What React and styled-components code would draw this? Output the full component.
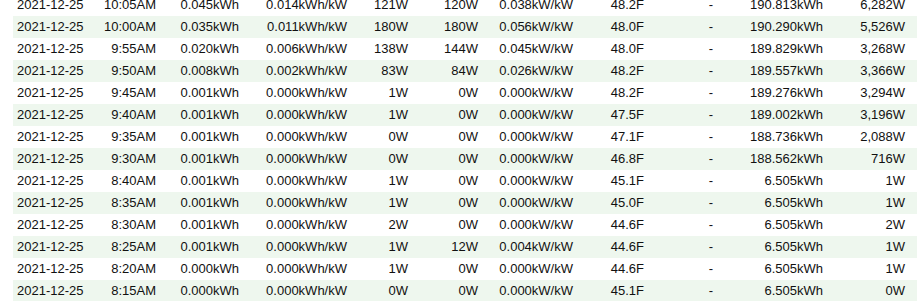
import React from "react";
import styled, { createGlobalStyle } from "styled-components";

const Global = createGlobalStyle`
  html, body { margin: 0; padding: 0; background: #fff; overflow: hidden; }
  body { font-family: "Liberation Sans", Arial, sans-serif; }
`;

const Viewport = styled.div`
  height: 301px;
  overflow: hidden;
  padding-left: 13px;
`;

const Table = styled.div`
  margin-top: -6px;
  display: flex;
  flex-direction: column;
`;

const Row = styled.div`
  display: grid;
  grid-template-columns: 87px 60px 83px 108px 61px 70px 95px 71px 126px 53px 82px 1fr;
  height: 22px;
  line-height: 22px;
  background: ${(p) => (p.$striped ? "#eef7ee" : "#ffffff")};
  font-size: 13px;
  color: #111;
`;

const justify = { left: "flex-start", center: "center", right: "flex-end" };

const Cell = styled.div`
  display: flex;
  padding: 0 4px;
  white-space: nowrap;
  justify-content: ${(p) => justify[p.$align || "right"]};
`;

const rows = [
  ["10:05AM", "0.045kWh", "0.014kWh/kW", "121W", "120W", "0.038kW/kW", "48.2F", "190.813kWh", "6,282W"],
  ["10:00AM", "0.035kWh", "0.011kWh/kW", "180W", "180W", "0.056kW/kW", "48.0F", "190.290kWh", "5,526W"],
  ["9:55AM", "0.020kWh", "0.006kWh/kW", "138W", "144W", "0.045kW/kW", "48.0F", "189.829kWh", "3,268W"],
  ["9:50AM", "0.008kWh", "0.002kWh/kW", "83W", "84W", "0.026kW/kW", "48.2F", "189.557kWh", "3,366W"],
  ["9:45AM", "0.001kWh", "0.000kWh/kW", "1W", "0W", "0.000kW/kW", "48.2F", "189.276kWh", "3,294W"],
  ["9:40AM", "0.001kWh", "0.000kWh/kW", "1W", "0W", "0.000kW/kW", "47.5F", "189.002kWh", "3,196W"],
  ["9:35AM", "0.001kWh", "0.000kWh/kW", "0W", "0W", "0.000kW/kW", "47.1F", "188.736kWh", "2,088W"],
  ["9:30AM", "0.001kWh", "0.000kWh/kW", "0W", "0W", "0.000kW/kW", "46.8F", "188.562kWh", "716W"],
  ["8:40AM", "0.001kWh", "0.000kWh/kW", "1W", "0W", "0.000kW/kW", "45.1F", "6.505kWh", "1W"],
  ["8:35AM", "0.001kWh", "0.000kWh/kW", "1W", "0W", "0.000kW/kW", "45.0F", "6.505kWh", "1W"],
  ["8:30AM", "0.001kWh", "0.000kWh/kW", "2W", "0W", "0.000kW/kW", "44.6F", "6.505kWh", "2W"],
  ["8:25AM", "0.001kWh", "0.000kWh/kW", "1W", "12W", "0.004kW/kW", "44.6F", "6.505kWh", "1W"],
  ["8:20AM", "0.000kWh", "0.000kWh/kW", "1W", "0W", "0.000kW/kW", "44.6F", "6.505kWh", "1W"],
  ["8:15AM", "0.000kWh", "0.000kWh/kW", "0W", "0W", "0.000kW/kW", "45.1F", "6.505kWh", "0W"],
];

export default function App() {
  return (
    <>
      <Global />
      <Viewport>
        <Table>
          {rows.map((r, i) => (
            <Row key={i} $striped={i % 2 === 1}>
              <Cell $align="left">2021-12-25</Cell>
              <Cell>{r[0]}</Cell>
              <Cell>{r[1]}</Cell>
              <Cell>{r[2]}</Cell>
              <Cell>{r[3]}</Cell>
              <Cell>{r[4]}</Cell>
              <Cell>{r[5]}</Cell>
              <Cell>{r[6]}</Cell>
              <Cell $align="center">-</Cell>
              <Cell>{r[7]}</Cell>
              <Cell>{r[8]}</Cell>
              <Cell />
            </Row>
          ))}
        </Table>
      </Viewport>
    </>
  );
}
